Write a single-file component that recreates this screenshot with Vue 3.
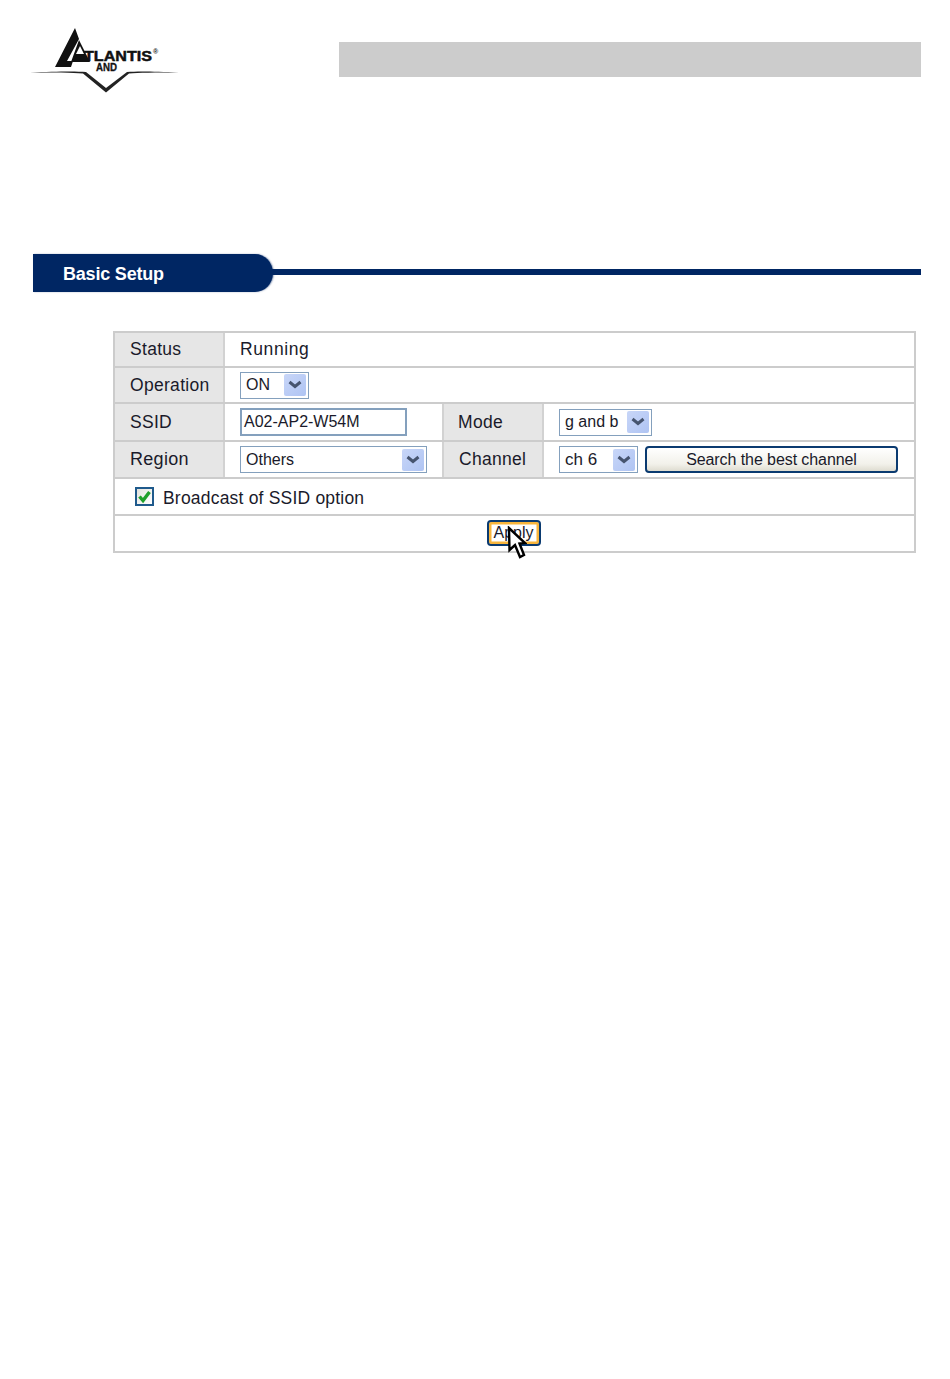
<script setup>
const arrow = 'M5.5 8 L11 12.5 L16.5 8'
</script>

<template>
  <div class="page">
    <header class="head">
      <svg class="logo" width="150" height="66" viewBox="0 0 150 66">
        <path d="M0 44.5 C25 43.5 45 43 56 44 L76 60 L97 44 C108 43 125 43.5 149 44.5 C125 44.6 108 44.6 99 45.5 L76 64.5 L53 45.5 C42 44.6 25 44.6 0 44.5 Z" fill="#222" />
        <path d="M25 39 L45 0 L49 11 L37 33 L43 33 L41 39 Z" fill="#111" />
        <path d="M41 34 L49 12 L60 34 Z M46 26 L54 26 L50 18 Z" fill="#111" fill-rule="evenodd" />
        <text x="54" y="33" class="logo-main" textLength="68" lengthAdjust="spacingAndGlyphs">TLANTIS</text>
        <text x="123" y="26" class="logo-reg">®</text>
        <text x="66" y="42.5" class="logo-sub" textLength="21" lengthAdjust="spacingAndGlyphs">AND</text>
      </svg>
      <div class="bar"></div>
    </header>

    <section class="banner">
      <div class="tab">Basic Setup</div>
      <div class="rule"></div>
    </section>

    <div class="form-wrap">
      <div class="form">
        <div class="row r1">
          <div class="label">Status</div>
          <div class="value running">Running</div>
        </div>
        <div class="row r2">
          <div class="label">Operation</div>
          <div class="value">
            <div class="select s-on"><span>ON</span><svg class="drop" viewBox="0 0 22 22"><path :d="arrow" /></svg></div>
          </div>
        </div>
        <div class="row r3 four">
          <div class="label">SSID</div>
          <div class="value"><div class="input">A02-AP2-W54M</div></div>
          <div class="label mid">Mode</div>
          <div class="value">
            <div class="select s-mode"><span>g and b</span><svg class="drop" viewBox="0 0 22 22"><path :d="arrow" /></svg></div>
          </div>
        </div>
        <div class="row r4 four">
          <div class="label big">Region</div>
          <div class="value">
            <div class="select s-region"><span>Others</span><svg class="drop" viewBox="0 0 22 22"><path :d="arrow" /></svg></div>
          </div>
          <div class="label mid chan">Channel</div>
          <div class="value gap">
            <div class="select s-ch"><span>ch 6</span><svg class="drop" viewBox="0 0 22 22"><path :d="arrow" /></svg></div>
            <button class="search">Search the best channel</button>
          </div>
        </div>
        <div class="row r5 solo">
          <span class="check"><svg width="15" height="15" viewBox="0 0 15 15"><path d="M2.5 7.5 L6 11.5 L12.5 3" fill="none" stroke="#1fa02a" stroke-width="3.4" /></svg></span>
          <span class="solo-text">Broadcast of SSID option</span>
        </div>
        <div class="row r6 center">
          <div class="apply-wrap">
            <button class="apply">Apply</button>
            <svg class="cursor" width="20" height="34" viewBox="0 0 20 34"><path d="M2 2 L2.5 24 L8 19 L13 31 L17 29 L12.5 17.5 L18 17 Z" fill="#fff" stroke="#000" stroke-width="2.4" /></svg>
          </div>
        </div>
      </div>
    </div>
  </div>
</template>

<style scoped>
.page {
  width: 950px;
  height: 1379px;
  background: #fff;
  box-sizing: border-box;
  padding-top: 28px;
  font-family: "Liberation Sans", Arial, sans-serif;
  color: #1a1a2a;
  overflow: hidden;
}
.head {
  display: flex;
  align-items: flex-start;
  padding-left: 30px;
  height: 64px;
}
.logo { flex: none; overflow: visible; }
.logo-main { font: 700 15.3px "Liberation Sans", sans-serif; fill: #111; stroke: #111; stroke-width: .5px; }
.logo-reg { font: 700 7px "Liberation Sans", sans-serif; fill: #222; }
.logo-sub { font: 700 10px "Liberation Sans", sans-serif; fill: #111; stroke: #111; stroke-width: .3px; }
.bar {
  width: 582px;
  height: 35px;
  margin: 14px 0 0 159px;
  background: #cccccc;
}
.banner {
  display: flex;
  align-items: center;
  margin: 162px 29px 0 33px;
  height: 38px;
}
.tab {
  width: 240px;
  height: 38px;
  flex: none;
  box-sizing: border-box;
  padding-left: 30px;
  background: #002663;
  border-radius: 0 18px 18px 0 / 0 19px 19px 0;
  box-shadow: 1px 0 1.5px rgba(0, 38, 99, .45);
  color: #fff;
  font-size: 18px;
  font-weight: 700;
  line-height: 40px;
  letter-spacing: -.2px;
}
.rule {
  flex: 1;
  height: 6px;
  margin-top: -2px;
  margin-left: -2px;
  background: #002663;
}
.form-wrap {
  margin-top: 39px;
  padding-left: 113px;
}
.form {
  width: 803px;
  box-sizing: border-box;
  border: 2px solid #cccccc;
  font-size: 17.5px;
  letter-spacing: .3px;
}
.row {
  display: grid;
  grid-template-columns: 110px 1fr;
  border-bottom: 2px solid #cccccc;
  box-sizing: border-box;
}
.row:last-child { border-bottom: 0; }
.four { grid-template-columns: 110px 217px 102px 1fr; }
.r1 { height: 35px; }
.r2 { height: 36px; }
.r3 { height: 38px; }
.r4 { height: 37px; }
.r5 { height: 37px; }
.r6 { height: 35px; }
.label {
  display: flex;
  align-items: center;
  padding-left: 15px;
  background: #e6e6e6;
  border-right: 2px solid #d2d2d2;
}
.mid { border-left: 2px solid #d2d2d2; padding-left: 14px; }
.chan { padding-left: 15px; }
.big { font-size: 18px; }
.value {
  display: flex;
  align-items: center;
  padding-left: 15px;
}
.running { letter-spacing: .6px; }
.gap { gap: 7px; }
.select {
  display: flex;
  align-items: center;
  justify-content: space-between;
  box-sizing: border-box;
  height: 27px;
  padding: 0 2px 0 5px;
  border: 1.5px solid #84a0bd;
  background: #fff;
  font-size: 16px;
  letter-spacing: 0;
}
.s-on { width: 69px; }
.s-mode { width: 93px; }
.s-region { width: 187px; }
.s-ch { width: 79px; }
.s-ch span { font-size: 17px; }
.drop {
  width: 22px;
  height: 22px;
  flex: none;
  border-radius: 2px;
  background: linear-gradient(135deg, #c8d6f8, #afc4f3);
}
.drop path {
  fill: none;
  stroke: #46546f;
  stroke-width: 3;
}
.input {
  width: 167px;
  height: 28px;
  box-sizing: border-box;
  padding-left: 2px;
  border: 2px solid #84a0bd;
  font-size: 16px;
  letter-spacing: 0;
  line-height: 24px;
}
.search {
  width: 253px;
  height: 27px;
  padding: 0;
  border: 2px solid #0a3a70;
  border-radius: 4px;
  background: linear-gradient(#fff, #f2f1ea 70%, #dedcd0);
  color: #1a1a2a;
  font: inherit;
  font-size: 16px;
  letter-spacing: -.08px;
}
.solo {
  display: flex;
  align-items: center;
  gap: 9px;
  padding-left: 20px;
}
.solo-text { padding-top: 4px; letter-spacing: .2px; }
.check {
  display: flex;
  align-items: center;
  justify-content: center;
  width: 19px;
  height: 19px;
  box-sizing: border-box;
  border: 2px solid #1f5a8c;
  background: linear-gradient(135deg, #e4e4de, #fff);
}
.center {
  display: flex;
  justify-content: center;
  align-items: center;
}
.apply-wrap { position: relative; display: flex; margin: -1px 2px 0 0; }
.apply {
  width: 54px;
  height: 26px;
  padding: 0;
  border: 2px solid #0a3a70;
  border-radius: 4px;
  background: #fff;
  box-shadow: inset 0 0 0 2.5px #f8b53c;
  color: #1a1a2a;
  font: inherit;
  font-size: 16px;
  letter-spacing: 0;
}
.cursor {
  position: absolute;
  left: 20px;
  top: 6px;
}
</style>
